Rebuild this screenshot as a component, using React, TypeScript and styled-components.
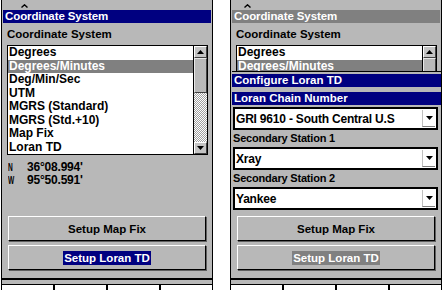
import React from 'react';
import styled, { createGlobalStyle } from 'styled-components';

const GRAY = '#b8b8b8';
const BLUE = '#000080';
const DARK = '#808080';

const Global = createGlobalStyle`
  html, body { margin: 0; padding: 0; background: #fff; width: 443px; height: 290px; overflow: hidden; }
  body { font-family: "Liberation Sans", Arial, sans-serif; font-weight: 700; color: #000; }
  * { box-sizing: border-box; }
`;

const Screen = styled.div`
  display: flex;
  gap: 17px;
  padding-left: 1px;
  width: 443px;
  height: 290px;
`;

const Panel = styled.div`
  width: 212px;
  height: 290px;
  flex: none;
  background: ${GRAY};
  border-left: 1px solid #000;
  border-right: 1px solid #000;
  display: flex;
  flex-direction: column;
  overflow: hidden;
`;

const TopStrip = styled.div<{ $caret: number }>`
  height: 10px;
  flex: none;
  padding-left: ${(p) => p.$caret}px;
  padding-top: 3px;
  line-height: 0;
`;

const TitleBar = styled.div<{ $active?: boolean }>`
  height: 13px;
  flex: none;
  margin: 0 1px;
  background: ${(p) => (p.$active ? BLUE : DARK)};
  color: #fff;
  font-size: 11.5px;
  line-height: 13px;
  padding-left: 2px;
  letter-spacing: -0.1px;
  white-space: nowrap;
`;

const FieldLabel = styled.div`
  margin-top: 5px;
  height: 12px;
  flex: none;
  font-size: 11.5px;
  line-height: 12px;
  padding-left: 5px;
  white-space: nowrap;
`;

const ListBox = styled.div<{ $h: number; $partial?: boolean }>`
  margin: 5px 4px 0 5px;
  height: ${(p) => p.$h}px;
  flex: none;
  border: 1px solid #000;
  border-bottom: ${(p) => (p.$partial ? 'none' : '1px solid #000')};
  background: #fff;
  display: flex;
  overflow: hidden;
`;

const Items = styled.div`
  flex: 1;
  display: flex;
  flex-direction: column;
`;

const Item = styled.div<{ $sel?: boolean }>`
  height: 13.5px;
  flex: none;
  line-height: 13.5px;
  font-size: 12px;
  padding-left: 1px;
  background: ${(p) => (p.$sel ? DARK : 'transparent')};
  color: ${(p) => (p.$sel ? '#fff' : '#000')};
  white-space: nowrap;
`;

const ScrollBar = styled.div`
  width: 14px;
  flex: none;
  display: flex;
  flex-direction: column;
  border-left: 1px solid #000;
`;

const ScrollBtn = styled.div`
  height: 12px;
  flex: none;
  background: #c4c4c4;
  border-top: 1px solid #fff;
  border-left: 1px solid #fff;
  border-bottom: 1px solid #404040;
  border-right: 1px solid #404040;
  display: flex;
  align-items: center;
  justify-content: center;
`;

const Thumb = styled.div`
  height: 35px;
  flex: none;
  background: ${GRAY};
  border-top: 1px solid #e8e8e8;
  border-left: 1px solid #e8e8e8;
  border-bottom: 1px solid #404040;
  border-right: 1px solid #404040;
`;

const Track = styled.div`
  flex: 1;
  background: repeating-conic-gradient(#ffffff 0 25%, #a0a0a0 0 50%) 0 0 / 2px 2px;
`;

const Coords = styled.div`
  margin-top: 6px;
  padding-left: 6px;
  flex: none;
`;

const CoordRow = styled.div`
  display: grid;
  grid-template-columns: 19px auto;
  height: 13px;
  line-height: 13px;
  font-size: 12px;
  letter-spacing: -0.2px;
`;

const Hemi = styled.span`
  display: inline-block;
  font-size: 11px;
  transform: scaleX(0.6);
  transform-origin: left center;
`;

const Spacer = styled.div`
  flex: 1;
`;

const ButtonStack = styled.div`
  display: flex;
  flex-direction: column;
  gap: 4px;
  margin: 0 6px 8px 6px;
  flex: none;
`;

const Button = styled.div`
  height: 25px;
  background: ${GRAY};
  border-top: 1px solid #fff;
  border-left: 1px solid #fff;
  border-bottom: 1px solid #000;
  border-right: 1px solid #000;
  box-shadow: 1px 1px 0 #606060;
  display: flex;
  align-items: center;
  justify-content: center;
  font-size: 11.5px;
`;

const ButtonText = styled.span<{ $hl?: 'blue' | 'gray' }>`
  line-height: 14px;
  padding: 0 1px;
  background: ${(p) => (p.$hl === 'blue' ? BLUE : p.$hl === 'gray' ? DARK : 'transparent')};
  color: ${(p) => (p.$hl ? '#fff' : '#000')};
`;

const BottomBar = styled.div`
  height: 12px;
  flex: none;
  border-top: 2px solid #000;
  display: flex;
  flex-direction: column;
  justify-content: flex-end;
`;

const Segments = styled.div`
  height: 6px;
  border-top: 1px solid #000;
  display: grid;
  grid-template-columns: repeat(4, 1fr);
  gap: 2px;
  background: #000;
`;

const Segment = styled.div`
  background: #fff;
`;

const Dialog = styled.div`
  margin-left: 1px;
  margin-right: -2px;
  border-top: 1px solid #000;
  padding-top: 2px;
  display: flex;
  flex-direction: column;
  flex: none;
`;

const DialogTitle = styled.div`
  height: 13px;
  background: ${BLUE};
  color: #fff;
  font-size: 11.5px;
  line-height: 13px;
  padding-left: 2px;
  white-space: nowrap;
`;

const FocusLabel = styled(DialogTitle)`
  margin-top: 5px;
`;

const DialogLabel = styled.div`
  margin-top: 2px;
  height: 13px;
  font-size: 11px;
  line-height: 13px;
  padding-left: 1px;
  letter-spacing: -0.2px;
  white-space: nowrap;
`;

const Dropdown = styled.div`
  margin: 2px 5px 0 1px;
  height: 23px;
  border: 2px solid #000;
  background: #fff;
  display: flex;
  align-items: center;
  font-size: 12px;
  letter-spacing: -0.2px;
  white-space: nowrap;
`;

const DropText = styled.span`
  flex: 1;
  padding-left: 1px;
`;

const DropBtn = styled.div`
  width: 13px;
  height: 17px;
  margin-right: 1px;
  border-left: 1px solid #c0c0c0;
  border-bottom: 1px solid #808080;
  display: flex;
  align-items: center;
  justify-content: center;
`;

const Caret = () => (
  <svg width="7" height="4" viewBox="0 0 7 4">
    <polyline points="0.5,3.5 3.5,0.8 6.5,3.5" fill="none" stroke="#000" strokeWidth="1.4" />
  </svg>
);

const Tri = ({ up }: { up?: boolean }) => (
  <svg width="7" height="4" viewBox="0 0 7 4">
    <polygon points={up ? '0,4 7,4 3.5,0' : '0,0 7,0 3.5,4'} fill="#000" />
  </svg>
);

const coordItems = [
  'Degrees',
  'Degrees/Minutes',
  'Deg/Min/Sec',
  'UTM',
  'MGRS (Standard)',
  'MGRS (Std.+10)',
  'Map Fix',
  'Loran TD',
];

const Bottom = () => (
  <BottomBar>
    <Segments>
      <Segment />
      <Segment />
      <Segment />
      <Segment />
    </Segments>
  </BottomBar>
);

const Buttons = ({ hl }: { hl: 'blue' | 'gray' }) => (
  <ButtonStack>
    <Button>
      <ButtonText>Setup Map Fix</ButtonText>
    </Button>
    <Button>
      <ButtonText $hl={hl}>Setup Loran TD</ButtonText>
    </Button>
  </ButtonStack>
);

export default function App() {
  return (
    <>
      <Global />
      <Screen>
        <Panel>
          <TopStrip $caret={19}>
            <Caret />
          </TopStrip>
          <TitleBar $active>Coordinate System</TitleBar>
          <FieldLabel>Coordinate System</FieldLabel>
          <ListBox $h={110}>
            <Items>
              {coordItems.map((t, i) => (
                <Item key={t} $sel={i === 1}>
                  {t}
                </Item>
              ))}
            </Items>
            <ScrollBar>
              <ScrollBtn>
                <Tri up />
              </ScrollBtn>
              <Thumb />
              <Track />
              <ScrollBtn>
                <Tri />
              </ScrollBtn>
            </ScrollBar>
          </ListBox>
          <Coords>
            <CoordRow>
              <Hemi>N</Hemi>
              <span>36°08.994'</span>
            </CoordRow>
            <CoordRow>
              <Hemi>W</Hemi>
              <span>95°50.591'</span>
            </CoordRow>
          </Coords>
          <Spacer />
          <Buttons hl="blue" />
          <Bottom />
        </Panel>

        <Panel>
          <TopStrip $caret={13}>
            <Caret />
          </TopStrip>
          <TitleBar>Coordinate System</TitleBar>
          <FieldLabel>Coordinate System</FieldLabel>
          <ListBox $h={26} $partial>
            <Items>
              <Item>Degrees</Item>
              <Item $sel>Degrees/Minutes</Item>
            </Items>
            <ScrollBar>
              <ScrollBtn>
                <Tri up />
              </ScrollBtn>
              <Thumb />
            </ScrollBar>
          </ListBox>
          <Dialog>
            <DialogTitle>Configure Loran TD</DialogTitle>
            <FocusLabel>Loran Chain Number</FocusLabel>
            <Dropdown>
              <DropText>GRI 9610 - South Central U.S</DropText>
              <DropBtn>
                <Tri />
              </DropBtn>
            </Dropdown>
            <DialogLabel>Secondary Station 1</DialogLabel>
            <Dropdown>
              <DropText>Xray</DropText>
              <DropBtn>
                <Tri />
              </DropBtn>
            </Dropdown>
            <DialogLabel>Secondary Station 2</DialogLabel>
            <Dropdown>
              <DropText>Yankee</DropText>
              <DropBtn>
                <Tri />
              </DropBtn>
            </Dropdown>
          </Dialog>
          <Spacer />
          <Buttons hl="gray" />
          <Bottom />
        </Panel>
      </Screen>
    </>
  );
}
